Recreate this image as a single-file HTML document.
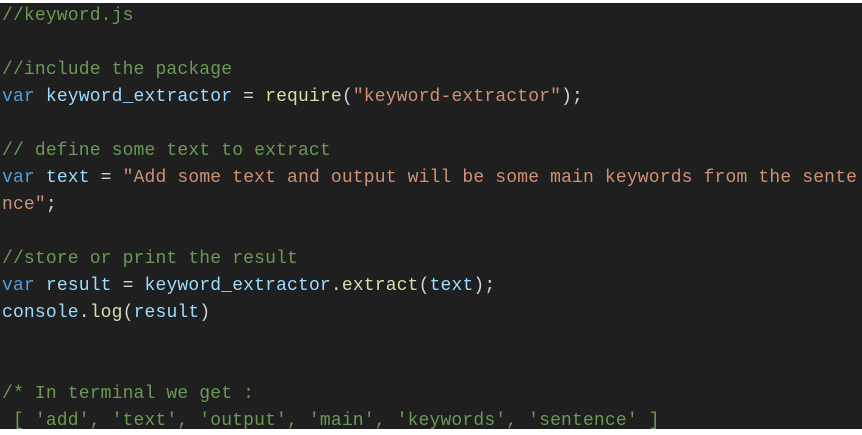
<!DOCTYPE html>
<html><head><style>
html,body{margin:0;padding:0;background:#fff;}
body{width:862px;height:433px;overflow:hidden;position:relative;}
.ed{position:absolute;left:0;top:3px;width:862px;height:426px;background:#1f1f1f;}
pre{margin:0;position:absolute;left:2px;top:0px;font-family:"Liberation Mono",monospace;font-size:18px;letter-spacing:0.16px;line-height:27px;color:#d4d4d4;white-space:pre;}
.c{color:#6a9955}.k{color:#569cd6}.v{color:#9cdcfe}.s{color:#ce9178}.f{color:#dcdcaa}
</style></head><body><div class="ed"><pre><span class="c">//keyword.js</span>

<span class="c">//include the package</span>
<span class="k">var</span> <span class="v">keyword_extractor</span> = <span class="f">require</span>(<span class="s">"keyword-extractor"</span>);

<span class="c">// define some text to extract</span>
<span class="k">var</span> <span class="v">text</span> = <span class="s">"Add some text and output will be some main keywords from the sente</span>
<span class="s">nce"</span>;

<span class="c">//store or print the result</span>
<span class="k">var</span> <span class="v">result</span> = <span class="v">keyword_extractor</span>.<span class="f">extract</span>(<span class="v">text</span>);
<span class="v">console</span>.<span class="f">log</span>(<span class="v">result</span>)


<span class="c">/* In terminal we get :</span>
<span class="c"> [ 'add', 'text', 'output', 'main', 'keywords', 'sentence' ]</span></pre></div></body></html>
